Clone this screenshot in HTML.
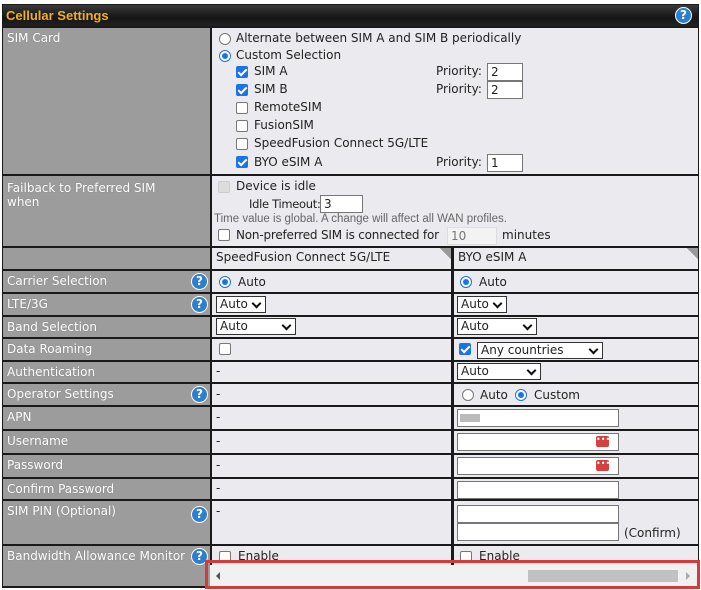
<!DOCTYPE html>
<html><head><meta charset="utf-8"><style>
*{box-sizing:border-box;margin:0;padding:0}
body{width:701px;height:590px;background:#fff;position:relative;overflow:hidden;font-family:"DejaVu Sans","Liberation Sans",sans-serif;font-size:12px;color:#222}
.a{position:absolute}
#frame{left:2px;top:4px;width:697px;height:584px;background:#1a1a1a}
.hd{left:3px;top:5px;width:695px;height:21px;background:linear-gradient(#3a3a3a,#151515 60%,#222);color:#f0b020;font-weight:bold;font-size:13px;padding:3px 0 0 3px;font-family:"Liberation Sans",sans-serif}
.l{background:#9c9c9c;color:#fff;left:3px;width:207px;padding:3px 0 0 4px;text-shadow:0 0 1px #777}
.c{background:#ebebef}
.q{width:17px;height:17px;border-radius:50%;background:#2c7fd0;border:1px solid #fff;color:#fff;font-weight:bold;font-size:12px;text-align:center;line-height:15px}
.rb{width:12px;height:12px;border-radius:50%;border:1px solid #777;background:#fff}
.rb.on{border:1px solid #1a73e8}
.rb.on:after{content:"";position:absolute;left:2px;top:2px;width:6px;height:6px;border-radius:50%;background:#1a73e8}
.cb{width:12px;height:12px;border:1px solid #777;border-radius:2px;background:#fff}
.cb.on{background:#1a73e8;border-color:#1a73e8}
.cb.on:after{content:"";position:absolute;left:3px;top:0px;width:3px;height:7px;border:solid #fff;border-width:0 2px 2px 0;transform:rotate(45deg)}
.in{background:#fff;border:1px solid #777;height:18px;padding-left:3px;font-size:12px;line-height:16px}
.sel{background:#fff;border:1px solid #333;height:17px;padding-left:3px;font-size:12px;line-height:15px}
.sel:after{content:"";position:absolute;right:5px;top:3px;width:5px;height:5px;border:solid #111;border-width:0 2px 2px 0;transform:rotate(45deg)}
.t{white-space:nowrap}
.pw{width:13px;height:11px;background:#d84040;border-radius:2px;color:#fff;font-size:8px;line-height:8px;text-align:center}
</style></head><body>
<div class="a" id="frame"></div>
<div class="a hd">Cellular Settings</div>
<div class="a q" style="left:675px;top:7px">?</div>

<div class="a l" style="top:28px;height:146px">SIM Card</div>
<div class="a c" style="left:212px;top:28px;width:486px;height:146px"></div>
<div class="a rb" style="left:219px;top:33px"></div><div class="a t" style="left:236px;top:31px">Alternate between SIM A and SIM B periodically</div>
<div class="a rb on" style="left:219px;top:50px"></div><div class="a t" style="left:236px;top:48px">Custom Selection</div>
<div class="a cb on" style="left:236px;top:66px"></div><div class="a t" style="left:254px;top:64px">SIM A</div>
<div class="a t" style="left:436px;top:64px">Priority:</div><div class="a in" style="left:487px;top:63px;width:36px">2</div>
<div class="a cb on" style="left:236px;top:84px"></div><div class="a t" style="left:254px;top:82px">SIM B</div>
<div class="a t" style="left:436px;top:82px">Priority:</div><div class="a in" style="left:487px;top:81px;width:36px">2</div>
<div class="a cb" style="left:236px;top:102px"></div><div class="a t" style="left:254px;top:100px">RemoteSIM</div>
<div class="a cb" style="left:236px;top:120px"></div><div class="a t" style="left:254px;top:118px">FusionSIM</div>
<div class="a cb" style="left:236px;top:138px"></div><div class="a t" style="left:254px;top:136px">SpeedFusion Connect 5G/LTE</div>
<div class="a cb on" style="left:236px;top:156px"></div><div class="a t" style="left:254px;top:155px">BYO eSIM A</div>
<div class="a t" style="left:436px;top:155px">Priority:</div><div class="a in" style="left:487px;top:154px;width:36px">1</div>

<div class="a l" style="top:176px;height:70px;line-height:14px;padding-top:5px">Failback to Preferred SIM<br>when</div>
<div class="a c" style="left:212px;top:176px;width:486px;height:70px"></div>
<div class="a cb" style="left:218px;top:181px;background:#ddd;border-color:#ccc"></div><div class="a t" style="left:236px;top:179px">Device is idle</div>
<div class="a t" style="left:249px;top:197px;font-size:11.5px;letter-spacing:-0.3px">Idle Timeout:</div><div class="a in" style="left:320px;top:195px;width:43px">3</div>
<div class="a t" style="left:214px;top:213px;font-family:'Liberation Sans',sans-serif;font-size:11.5px;color:#666">Time value is global. A change will affect all WAN profiles.</div>
<div class="a cb" style="left:218px;top:229px"></div><div class="a t" style="left:236px;top:228px;letter-spacing:-0.2px">Non-preferred SIM is connected for</div>
<div class="a in" style="left:447px;top:227px;width:50px;background:#f3f3f3;border-color:#ddd;color:#777">10</div>
<div class="a t" style="left:502px;top:228px">minutes</div>

<div class="a l" style="top:248px;height:21px"></div>
<div class="a c" style="left:212px;top:248px;width:239px;height:21px;padding:2px 0 0 4px;background:linear-gradient(225deg,#999 0 8px,#ebebef 8px)">SpeedFusion Connect 5G/LTE</div>
<div class="a c" style="left:454px;top:248px;width:244px;height:21px;padding:2px 0 0 4px;background:linear-gradient(225deg,#999 0 8px,#ebebef 8px)">BYO eSIM A</div>

<div class="a l" style="top:271px;height:21px">Carrier Selection</div><div class="a q" style="left:191px;top:273px">?</div>
<div class="a c" style="left:212px;top:271px;width:239px;height:21px"></div><div class="a c" style="left:454px;top:271px;width:244px;height:21px"></div>
<div class="a rb on" style="left:219px;top:276px"></div><div class="a t" style="left:238px;top:275px">Auto</div>
<div class="a rb on" style="left:460px;top:276px"></div><div class="a t" style="left:479px;top:275px">Auto</div>

<div class="a l" style="top:294px;height:21px">LTE/3G</div><div class="a q" style="left:191px;top:296px">?</div>
<div class="a c" style="left:212px;top:294px;width:239px;height:21px"></div><div class="a c" style="left:454px;top:294px;width:244px;height:21px"></div>
<div class="a sel" style="left:216px;top:296px;width:50px">Auto</div>
<div class="a sel" style="left:457px;top:296px;width:50px">Auto</div>

<div class="a l" style="top:317px;height:20px">Band Selection</div>
<div class="a c" style="left:212px;top:317px;width:239px;height:20px"></div><div class="a c" style="left:454px;top:317px;width:244px;height:20px"></div>
<div class="a sel" style="left:216px;top:318px;width:80px">Auto</div>
<div class="a sel" style="left:457px;top:318px;width:80px">Auto</div>

<div class="a l" style="top:339px;height:21px">Data Roaming</div>
<div class="a c" style="left:212px;top:339px;width:239px;height:21px"></div><div class="a c" style="left:454px;top:339px;width:244px;height:21px"></div>
<div class="a cb" style="left:219px;top:343px"></div>
<div class="a cb on" style="left:459px;top:343px"></div>
<div class="a sel" style="left:477px;top:342px;width:126px">Any countries</div>

<div class="a l" style="top:362px;height:20px">Authentication</div>
<div class="a c" style="left:212px;top:362px;width:239px;height:20px;padding:2px 0 0 4px">-</div><div class="a c" style="left:454px;top:362px;width:244px;height:20px"></div>
<div class="a sel" style="left:457px;top:363px;width:84px">Auto</div>

<div class="a l" style="top:384px;height:21px">Operator Settings</div><div class="a q" style="left:191px;top:386px">?</div>
<div class="a c" style="left:212px;top:384px;width:239px;height:21px;padding:3px 0 0 4px">-</div><div class="a c" style="left:454px;top:384px;width:244px;height:21px"></div>
<div class="a rb" style="left:462px;top:389px"></div><div class="a t" style="left:480px;top:388px">Auto</div>
<div class="a rb on" style="left:515px;top:389px"></div><div class="a t" style="left:534px;top:388px">Custom</div>

<div class="a l" style="top:407px;height:22px">APN</div>
<div class="a c" style="left:212px;top:407px;width:239px;height:22px;padding:3px 0 0 4px">-</div><div class="a c" style="left:454px;top:407px;width:244px;height:22px"></div>
<div class="a in" style="left:457px;top:409px;width:162px"></div><div class="a" style="left:460px;top:414px;width:20px;height:8px;background:#bbb"></div>

<div class="a l" style="top:431px;height:22px">Username</div>
<div class="a c" style="left:212px;top:431px;width:239px;height:22px;padding:3px 0 0 4px">-</div><div class="a c" style="left:454px;top:431px;width:244px;height:22px"></div>
<div class="a in" style="left:457px;top:433px;width:162px"></div><div class="a pw" style="left:596px;top:436px">•••</div>

<div class="a l" style="top:455px;height:22px">Password</div>
<div class="a c" style="left:212px;top:455px;width:239px;height:22px;padding:3px 0 0 4px">-</div><div class="a c" style="left:454px;top:455px;width:244px;height:22px"></div>
<div class="a in" style="left:457px;top:457px;width:162px"></div><div class="a pw" style="left:596px;top:460px">•••</div>

<div class="a l" style="top:479px;height:20px">Confirm Password</div>
<div class="a c" style="left:212px;top:479px;width:239px;height:20px;padding:2px 0 0 4px">-</div><div class="a c" style="left:454px;top:479px;width:244px;height:20px"></div>
<div class="a in" style="left:457px;top:481px;width:162px"></div>

<div class="a l" style="top:501px;height:43px">SIM PIN (Optional)</div><div class="a q" style="left:191px;top:506px">?</div>
<div class="a c" style="left:212px;top:501px;width:239px;height:43px;padding:3px 0 0 4px">-</div><div class="a c" style="left:454px;top:501px;width:244px;height:43px"></div>
<div class="a in" style="left:457px;top:505px;width:162px"></div>
<div class="a in" style="left:457px;top:523px;width:162px"></div>
<div class="a t" style="left:624px;top:526px">(Confirm)</div>

<div class="a l" style="top:546px;height:40px">Bandwidth Allowance Monitor</div><div class="a q" style="left:191px;top:548px">?</div>
<div class="a c" style="left:212px;top:546px;width:239px;height:20px"></div><div class="a c" style="left:454px;top:546px;width:244px;height:20px"></div>
<div class="a cb" style="left:219px;top:551px"></div><div class="a t" style="left:238px;top:549px">Enable</div>
<div class="a cb" style="left:460px;top:551px"></div><div class="a t" style="left:479px;top:549px">Enable</div>

<div class="a" style="left:210px;top:565px;width:488px;height:21px;background:#f1f1f1"></div>
<div class="a" style="left:528px;top:570px;width:150px;height:12px;background:#c1c1c1"></div>
<div class="a" style="left:216px;top:572px;width:0;height:0;border-top:4px solid transparent;border-bottom:4px solid transparent;border-right:4px solid #555"></div>
<div class="a" style="left:686px;top:572px;width:0;height:0;border-top:4px solid transparent;border-bottom:4px solid transparent;border-left:4px solid #aaa"></div>
<div class="a" style="left:205px;top:560px;width:495px;height:29px;border:3px solid #d43c3c"></div>
</body></html>
